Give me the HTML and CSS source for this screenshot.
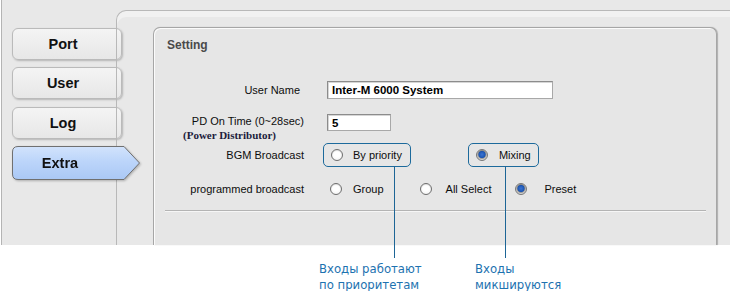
FILE: index.html
```html
<!DOCTYPE html>
<html lang="ru">
<head>
    <meta charset="UTF-8">
    <title>Setting - Extra</title>
    <link rel="stylesheet" href="styles.css">
</head>
<body>
    <div class="screen">
        <div class="sidebar">
            <div class="tab">Port</div>
            <div class="tab">User</div>
            <div class="tab tab-log">Log</div>
            <div class="tab tab-active">Extra</div>
        </div>

        <div class="main">
            <div class="panel">
                <div class="panel-title">Setting</div>

                <div class="row row-name">
                    <div class="label label-name">User Name</div>
                    <input class="field field-wide" type="text" value="Inter-M 6000 System">
                </div>

                <div class="row row-pd">
                    <div class="label">
                        PD On Time (0~28sec)
                        <span class="sublabel">(Power Distributor)</span>
                    </div>
                    <input class="field field-short" type="text" value="5">
                </div>

                <div class="row row-bgm">
                    <div class="label">BGM Broadcast</div>
                    <div class="options">
                        <div class="choice choice-priority">
                            <span class="radio"></span>
                            <span>By priority</span>
                        </div>
                        <div class="choice choice-mixing">
                            <span class="radio on"></span>
                            <span>Mixing</span>
                        </div>
                    </div>
                </div>

                <div class="row row-prog">
                    <div class="label">programmed broadcast</div>
                    <div class="options">
                        <div class="opt opt-group"><span class="radio"></span><span>Group</span></div>
                        <div class="opt opt-all"><span class="radio"></span><span>All Select</span></div>
                        <div class="opt opt-preset"><span class="radio on"></span><span>Preset</span></div>
                    </div>
                </div>

                <div class="separator"></div>
            </div>
        </div>
    </div>

    <div class="notes">
        <div class="note note-priority">Входы работают<br>по приоритетам</div>
        <div class="note">Входы<br>микшируются</div>
    </div>
</body>
</html>
```

FILE: styles.css
```css
* {
    box-sizing: border-box;
}
body {
    margin: 0;
    background: #fff;
    font-family: 'Liberation Sans', Arial, sans-serif;
    color: #111;
}
.screen {
    display: flex;
    height: 245px;
    margin-left: 1px;
    border-left: 1px solid #b4b4b4;
    background: #e8e8e8;
}

/* left tabs */
.sidebar {
    width: 114px;
    flex-shrink: 0;
    padding: 28px 0 0 10px;
    display: flex;
    flex-direction: column;
    gap: 7px;
}
.tab {
    width: 110px;
    height: 32px;
    padding-right: 8px;
    display: flex;
    align-items: center;
    justify-content: center;
    border: 1px solid #bababa;
    border-radius: 6px;
    background: linear-gradient(#f4f4f4, #e7e7e7);
    box-shadow: 1px 1px 2px rgba(0, 0, 0, 0.22);
    font-size: 14.5px;
    font-weight: bold;
    color: #111;
}
.tab-log {
    margin-top: 1px;
}
.tab-active {
    width: 129px;
    height: 34px;
    padding-right: 33px;
    border: none;
    border-radius: 0;
    box-shadow: none;
    background: url("data:image/svg+xml,%3Csvg xmlns='http://www.w3.org/2000/svg' width='129' height='34' viewBox='0 0 129 34'%3E%3Cdefs%3E%3ClinearGradient id='g' x1='0' y1='0' x2='0' y2='1'%3E%3Cstop offset='0' stop-color='%23d2e3fc'/%3E%3Cstop offset='0.45' stop-color='%23bcd5fa'/%3E%3Cstop offset='1' stop-color='%23aac8f5'/%3E%3C/linearGradient%3E%3C/defs%3E%3Cpath d='M6 0.5H112L127.5 17L112 33.5H6Q0.5 33.5 0.5 28V6Q0.5 0.5 6 0.5Z' fill='url(%23g)' stroke='%23707070'/%3E%3C/svg%3E") no-repeat;
    filter: drop-shadow(1px 1px 1px rgba(0, 0, 0, 0.25));
}

/* main area */
.main {
    flex: 1;
    display: flex;
    flex-direction: column;
    margin-top: 10px;
    padding: 16px 13px 0 36px;
    border-top: 1px solid #b8b8b8;
    border-left: 1px solid #b8b8b8;
    border-top-left-radius: 10px;
    box-shadow: inset 0 6px 0 #f1f1f1;
}
.panel {
    flex: 1;
    padding: 9px 10px 0 13px;
    border: 1px solid #a6a6a6;
    border-bottom: none;
    border-radius: 7px 7px 0 0;
    background: #e6e6e6;
    box-shadow: inset 1px 1px 0 #fbfbfb, 1px 0 1px rgba(0, 0, 0, 0.25);
}
.panel-title {
    line-height: 16px;
    font-size: 12px;
    font-weight: bold;
    color: #4a4a4a;
}

/* form rows */
.row {
    display: grid;
    grid-template-columns: 137px 1fr;
    column-gap: 23px;
    align-items: center;
    font-size: 11px;
    color: #0d0d0d;
}
.label {
    text-align: right;
    line-height: 16px;
}
.label-name {
    padding-right: 4px;
}
.row-name {
    margin-top: 28px;
}
.row-pd {
    margin-top: 14px;
    align-items: start;
}
.row-pd .field {
    margin-top: 1px;
}
.sublabel {
    display: block;
    margin-left: 16px;
    text-align: left;
    line-height: 12px;
    font-family: 'Liberation Serif', 'Times New Roman', serif;
    font-size: 11px;
    font-weight: bold;
    color: #1c1c3c;
}
.row-bgm {
    margin-top: 2px;
}
.row-prog {
    margin-top: 14px;
}

.field {
    height: 18px;
    padding: 0 4px;
    border: 1px solid #8c8c8c;
    border-right-color: #a8a8a8;
    border-bottom-color: #a8a8a8;
    background: #fff;
    box-shadow: inset 1px 1px 0 #d6d6d6;
    font-family: 'Liberation Sans', Arial, sans-serif;
    font-size: 11.5px;
    font-weight: bold;
    color: #000;
    outline: none;
}
.field-wide {
    width: 226px;
}
.field-short {
    width: 64px;
    height: 17px;
}

/* radio options */
.options {
    display: flex;
    align-items: center;
}
.radio {
    width: 12px;
    height: 12px;
    flex-shrink: 0;
    border: 1px solid #6e6e6e;
    border-radius: 50%;
    background: radial-gradient(circle at 50% 40%, #fff 40%, #ececec 100%);
    box-shadow: inset 0 1px 1px rgba(0, 0, 0, 0.12);
}
.radio.on {
    border-color: #777;
    background: radial-gradient(circle at 50% 45%, #3b74d2 0, #1c55b2 3.2px, #9a9a9a 4px, #d4d4d4 5px);
}
.choice {
    position: relative;
    height: 24px;
    display: flex;
    align-items: center;
    gap: 10px;
    padding: 0 8px 0 7px;
    border: 1px solid #1d6a9c;
    border-radius: 5px;
}
.choice::after {
    content: "";
    position: absolute;
    top: 100%;
    width: 1px;
    height: 92px;
    background: #1d6596;
}
.choice-priority {
    margin-left: -4px;
}
.choice-priority::after {
    left: 70px;
}
.choice-mixing {
    margin-left: 57px;
    gap: 11px;
    padding-right: 7px;
}
.choice-mixing::after {
    left: 36px;
}
.opt {
    display: flex;
    align-items: center;
    gap: 11px;
    line-height: 16px;
}
.opt-group {
    margin-left: 3px;
}
.opt-all {
    margin-left: 36px;
    gap: 14px;
}
.opt-preset {
    margin-left: 24px;
    gap: 17px;
}

.separator {
    margin: 13px 0 0 -2px;
    height: 2px;
    border-top: 1px solid #b4b4b4;
    border-bottom: 1px solid #f6f6f6;
}

/* annotations */
.notes {
    display: flex;
    padding: 16px 0 0 319px;
}
.note {
    font-family: 'DejaVu Sans', Verdana, sans-serif;
    font-size: 11.7px;
    line-height: 16px;
    color: #1d72b0;
}
.note-priority {
    width: 156px;
}
```
